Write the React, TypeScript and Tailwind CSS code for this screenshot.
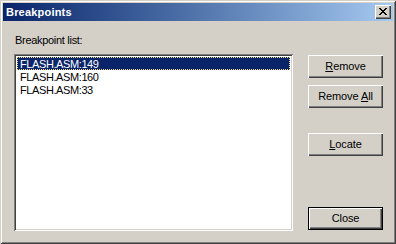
import React from 'react';

const font = "font-['Tahoma','Liberation_Sans',Arial,sans-serif]";

function Btn({ children, isDefault }: { children: React.ReactNode; isDefault?: boolean }) {
  return (
    <div
      className={`w-[75px] h-[23px] flex items-center justify-center bg-[#d4d0c8] text-[11px] text-black tracking-[-0.1px] ${
        isDefault
          ? 'shadow-[inset_1px_1px_0_#000,inset_-1px_-1px_0_#000,inset_2px_2px_0_#fff,inset_-2px_-2px_0_#404040,inset_-3px_-3px_0_#808080]'
          : 'shadow-[inset_1px_1px_0_#fff,inset_-1px_-1px_0_#404040,inset_-2px_-2px_0_#808080]'
      }`}
    >
      {children}
    </div>
  );
}

const items = ['FLASH.ASM:149', 'FLASH.ASM:160', 'FLASH.ASM:33'];

export default function App() {
  return (
    <div
      className={`w-[396px] h-[244px] bg-[#d4d0c8] p-[3px] flex flex-col ${font} shadow-[inset_1px_1px_0_#d4d0c8,inset_-1px_-1px_0_#404040,inset_2px_2px_0_#fff,inset_-2px_-2px_0_#808080]`}
    >
      {/* Title bar */}
      <div className="h-[18px] flex items-center justify-between bg-gradient-to-r from-[#0a246a] to-[#a6caf0] pl-[3px] pr-[2px]">
        <span className="text-white font-bold text-[11px] tracking-[0.2px] leading-none">Breakpoints</span>
        <div className="w-[16px] h-[14px] bg-[#d4d0c8] flex items-center justify-center shadow-[inset_1px_1px_0_#fff,inset_-1px_-1px_0_#404040,inset_-2px_-2px_0_#808080]">
          <svg width="8" height="7" viewBox="0 0 8 7" className="mb-[1px]">
            <path d="M0 0h2v1h1v1h2v-1h1v-1h2v1h-1v1h-1v1h-1v1h1v1h1v1h1v1h-2v-1h-1v-1h-2v1h-1v1h-2v-1h1v-1h1v-1h1v-1h-1v-1h-1v-1h-1z" fill="#000" />
          </svg>
        </div>
      </div>

      {/* Body */}
      <div className="flex pl-[11px] text-black">
        <div className="flex flex-col w-[279px]">
          <div className="mt-[13px] h-[13px] text-[11px] leading-[13px] tracking-[-0.3px] pl-[1px]">Breakpoint list:</div>
          <div className="mt-[7px] h-[177px] bg-white p-[2px] shadow-[inset_1px_1px_0_#808080,inset_-1px_-1px_0_#fff,inset_2px_2px_0_#404040,inset_-2px_-2px_0_#d4d0c8]">
            <div className="flex flex-col pt-[1px] px-[1px]">
              {items.map((it, i) => (
                <div
                  key={it}
                  className={`h-[13px] pl-[2px] text-[11px] leading-[12px] tracking-[-0.4px] ${
                    i === 0 ? 'bg-[#0a246a] text-white border border-dotted border-[#f0d98a] pl-[1px]' : 'border border-transparent'
                  }`}
                >
                  {it}
                </div>
              ))}
            </div>
          </div>
        </div>

        <div className="flex flex-col ml-[15px] mt-[34px]">
          <Btn>
            <span><span className="underline">R</span>emove</span>
          </Btn>
          <div className="mt-[7px]">
            <Btn>
              <span>Remove <span className="underline">A</span>ll</span>
            </Btn>
          </div>
          <div className="mt-[25px]">
            <Btn>
              <span><span className="underline">L</span>ocate</span>
            </Btn>
          </div>
          <div className="mt-[51px]">
            <Btn isDefault>Close</Btn>
          </div>
        </div>
      </div>
    </div>
  );
}
